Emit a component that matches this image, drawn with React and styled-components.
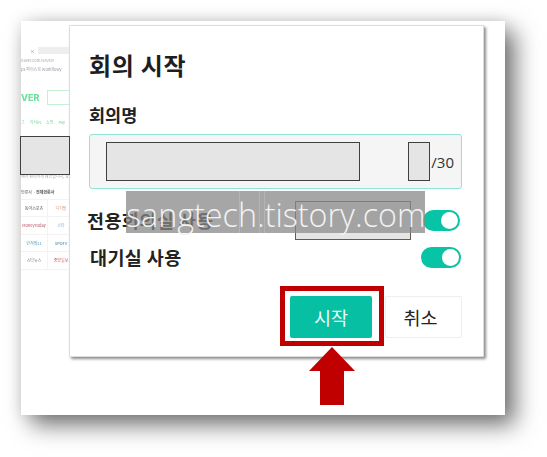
import React from "react";
import styled, { createGlobalStyle } from "styled-components";

const Global = createGlobalStyle`
  html, body { margin: 0; padding: 0; background: #fff; }
  body { font-family: "Noto Sans CJK KR", "Noto Sans", sans-serif; }
`;

const Page = styled.div`
  width: 547px;
  height: 457px;
  padding: 21px 0 0 21px;
  box-sizing: border-box;
  overflow: hidden;
  background: #fff;
`;

const Shot = styled.div`
  position: relative;
  width: 484px;
  height: 394px;
  display: flex;
  background: #fff;
  box-shadow: 10px 10px 22px rgba(0, 0, 0, 0.55), 0 0 14px rgba(0, 0, 0, 0.1);
`;

const Backdrop = styled.div`
  width: 48px;
  flex: none;
  overflow: hidden;
  filter: blur(0.7px);
  padding-top: 26px;
  box-sizing: border-box;
  white-space: nowrap;
  font-size: 5px;
  color: #777;
`;

const TabLine = styled.div`
  display: flex;
  align-items: center;
  gap: 3px;
  height: 7px;
  padding-left: 9px;
  color: #888;
`;

const TabField = styled.span`
  width: 32px;
  height: 7px;
  flex: none;
  background: #eee;
`;

const Crumb = styled.div`
  margin-top: 3px;
  height: 7px;
  line-height: 7px;
  font-size: 4px;
  color: #aaa;
`;

const Bookmarks = styled.div`
  margin-top: 1px;
  height: 8px;
  line-height: 8px;
  font-size: 4px;
  color: #99a;
`;

const LogoRow = styled.div`
  display: flex;
  align-items: center;
  gap: 8px;
  margin-top: 16px;
  height: 16px;
`;

const Logo = styled.span`
  font: 800 9px "Inter", sans-serif;
  color: #6fe0a0;
`;

const SearchStub = styled.span`
  width: 24px;
  height: 15px;
  border: 1px solid #c4f0d3;
  box-sizing: border-box;
  flex: none;
`;

const NavRow = styled.div`
  margin-top: 14px;
  height: 7px;
  line-height: 7px;
  font-size: 4px;
  color: #7fd9a0;
  display: flex;
  gap: 5px;
`;

const Notice = styled.div`
  margin-top: 47px;
  height: 7px;
  line-height: 7px;
  font-size: 4px;
  color: #aaa;
`;

const Tabs = styled.div`
  margin-top: 8px;
  height: 8px;
  line-height: 8px;
  font-size: 4px;
  color: #555;
`;

const PressGrid = styled.div`
  margin-top: 3px;
  display: grid;
  grid-template-columns: 27px 27px;
  grid-auto-rows: 17.4px;
  border-top: 1px solid #f3f3f3;
`;

const PressCell = styled.div`
  border-right: 1px solid #f3f3f3;
  border-bottom: 1px solid #f3f3f3;
  font-size: 4px;
  line-height: 17px;
  text-align: center;
  overflow: hidden;
  color: ${(p) => p.$color};
`;

const Dialog = styled.section`
  width: 415px;
  height: 332px;
  margin-top: 4px;
  flex: none;
  box-sizing: border-box;
  background: #fff;
  border: 1px solid #dcdcdc;
  box-shadow: 2px 2px 3px rgba(0, 0, 0, 0.45);
  border-radius: 1px;
  padding: 21px 21px 0 19px;
  display: flex;
  flex-direction: column;
`;

const Title = styled.h2`
  margin: 0;
  height: 36px;
  line-height: 36px;
  font-size: 24px;
  font-weight: 700;
  letter-spacing: 0.7px;
  color: #1e1e1e;
`;

const FieldLabel = styled.label`
  margin-top: 20px;
  height: 24px;
  line-height: 24px;
  font-size: 17.5px;
  font-weight: 700;
  color: #222;
`;

const InputBox = styled.div`
  margin-top: 7px;
  height: 55px;
  box-sizing: border-box;
  border: 1.5px solid #93e3d2;
  border-radius: 3px;
  background: #f5f5f5;
  display: flex;
  align-items: center;
  justify-content: flex-end;
  padding-right: 7px;
`;

const Counter = styled.span`
  font-size: 15px;
  color: #333;
  font-family: "Open Sans", sans-serif;
`;

const Redact = styled.div`
  position: absolute;
  left: ${(p) => p.$x}px;
  top: ${(p) => p.$y}px;
  width: ${(p) => p.$w}px;
  height: ${(p) => p.$h}px;
  box-sizing: border-box;
  background: #e5e5e5;
  border: 1px solid #404040;
`;

const OptionRow = styled.div`
  display: flex;
  align-items: center;
  justify-content: space-between;
  height: 24px;
  margin-top: ${(p) => p.$top}px;
  margin-left: ${(p) => p.$indent}px;
  padding-right: ${(p) => p.$pad}px;
`;

const OptionLabel = styled.span`
  font-size: 18.5px;
  line-height: 24px;
  font-weight: 700;
  letter-spacing: 0.4px;
  color: #222;
`;

const Toggle = styled.span`
  display: flex;
  justify-content: flex-end;
  align-items: center;
  flex: none;
  box-sizing: border-box;
  width: ${(p) => p.$w}px;
  height: ${(p) => p.$h}px;
  padding-right: 2px;
  border-radius: 11px;
  background: #07c4a6;
`;

const Knob = styled.span`
  width: ${(p) => p.$size}px;
  height: ${(p) => p.$size}px;
  border-radius: 50%;
  background: #fff;
`;

const Actions = styled.div`
  display: flex;
  justify-content: flex-end;
  gap: 13px;
  margin-top: 27px;
`;

const BaseButton = styled.button`
  height: 42px;
  padding: 0;
  border-radius: 2px;
  font-family: inherit;
  font-size: 18.5px;
`;

const StartButton = styled(BaseButton)`
  width: 82px;
  border: 0;
  background: #07bfa2;
  color: #e9fbf7;
`;

const CancelButton = styled(BaseButton)`
  width: 77px;
  border: 1px solid #eee;
  background: #fff;
  color: #222;
  padding-right: 6px;
`;

const Watermark = styled.div`
  position: absolute;
  left: 105px;
  top: 170px;
  width: 299px;
  height: 42px;
  background: rgba(136, 136, 136, 0.75);
  color: #f2f2f2;
  font: 300 32.3px/46px "Open Sans", sans-serif;
  text-align: center;
  white-space: nowrap;
`;

const Seam = styled.span`
  position: absolute;
  top: 0;
  bottom: 0;
  left: ${(p) => p.$x}px;
  width: 1px;
  background: #b4b4b4;
`;

const RedactOutline = styled.div`
  position: absolute;
  left: 274px;
  top: 180px;
  width: 116px;
  height: 39px;
  box-sizing: border-box;
  border: 1px solid #5c5c5c;
  background: linear-gradient(rgba(0, 0, 0, 0.05) 0 31px, #e5e5e5 31px);
`;

const RedFrame = styled.div`
  position: absolute;
  left: 259px;
  top: 265px;
  width: 104px;
  height: 60px;
  box-sizing: border-box;
  border: 5px solid #c00000;
`;

const Arrow = styled.svg`
  position: absolute;
  left: 287px;
  top: 326px;
`;

export default function App() {
  return (
    <Page>
      <Global />
      <Shot>
        <Backdrop aria-hidden="true">
          <TabLine>× <TabField /></TabLine>
          <Crumb>naver.com NAVER</Crumb>
          <Bookmarks>ps 파이스북 Workflowy</Bookmarks>
          <LogoRow><Logo>VER</Logo><SearchStub /></LogoRow>
          <NavRow><span>그</span><span>지식iN</span><span>쇼핑</span><span>Pay</span></NavRow>
          <Notice>에서 편리하게 제공합니다, 요즘</Notice>
          <Tabs>언론사 · <b>전체언론사</b></Tabs>
          <PressGrid>
            <PressCell $color="#555">동아스포츠</PressCell><PressCell $color="#d98">디지털</PressCell>
            <PressCell $color="#b56">MoneyToday</PressCell><PressCell $color="#8ac">스타</PressCell>
            <PressCell $color="#59b">한겨레21</PressCell><PressCell $color="#37a">SPOTV</PressCell>
            <PressCell $color="#888">스타뉴스</PressCell><PressCell $color="#c55">중앙일보</PressCell>
          </PressGrid>
        </Backdrop>
        <Dialog>
          <Title>회의 시작</Title>
          <FieldLabel>회의명</FieldLabel>
          <InputBox>
            <Counter>/30</Counter>
          </InputBox>
          <OptionRow $top={19} $indent={-2} $pad={2}>
            <OptionLabel>전용회의실 사용</OptionLabel>
            <Toggle $w={37} $h={21}><Knob $size={17} /></Toggle>
          </OptionRow>
          <OptionRow $top={13} $indent={1} $pad={1}>
            <OptionLabel>대기실 사용</OptionLabel>
            <Toggle $w={40} $h={21}><Knob $size={17} /></Toggle>
          </OptionRow>
          <Actions>
            <StartButton>시작</StartButton>
            <CancelButton>취소</CancelButton>
          </Actions>
        </Dialog>

        <Redact $x={-1} $y={115} $w={50} $h={39} />
        <Redact $x={85} $y={121} $w={254} $h={39} />
        <Redact $x={387} $y={121} $w={22} $h={39} />
        <RedactOutline />
        <Watermark>
          <Seam $x={113} /><Seam $x={133} /><Seam $x={138} />
          sangtech.tistory.com
        </Watermark>
        <RedFrame />
        <Arrow width="48" height="60" viewBox="0 0 48 60">
          <path d="M24 0 L47 24 H36 V58 H12 V24 H1 Z" fill="#c00000" />
        </Arrow>
      </Shot>
    </Page>
  );
}
